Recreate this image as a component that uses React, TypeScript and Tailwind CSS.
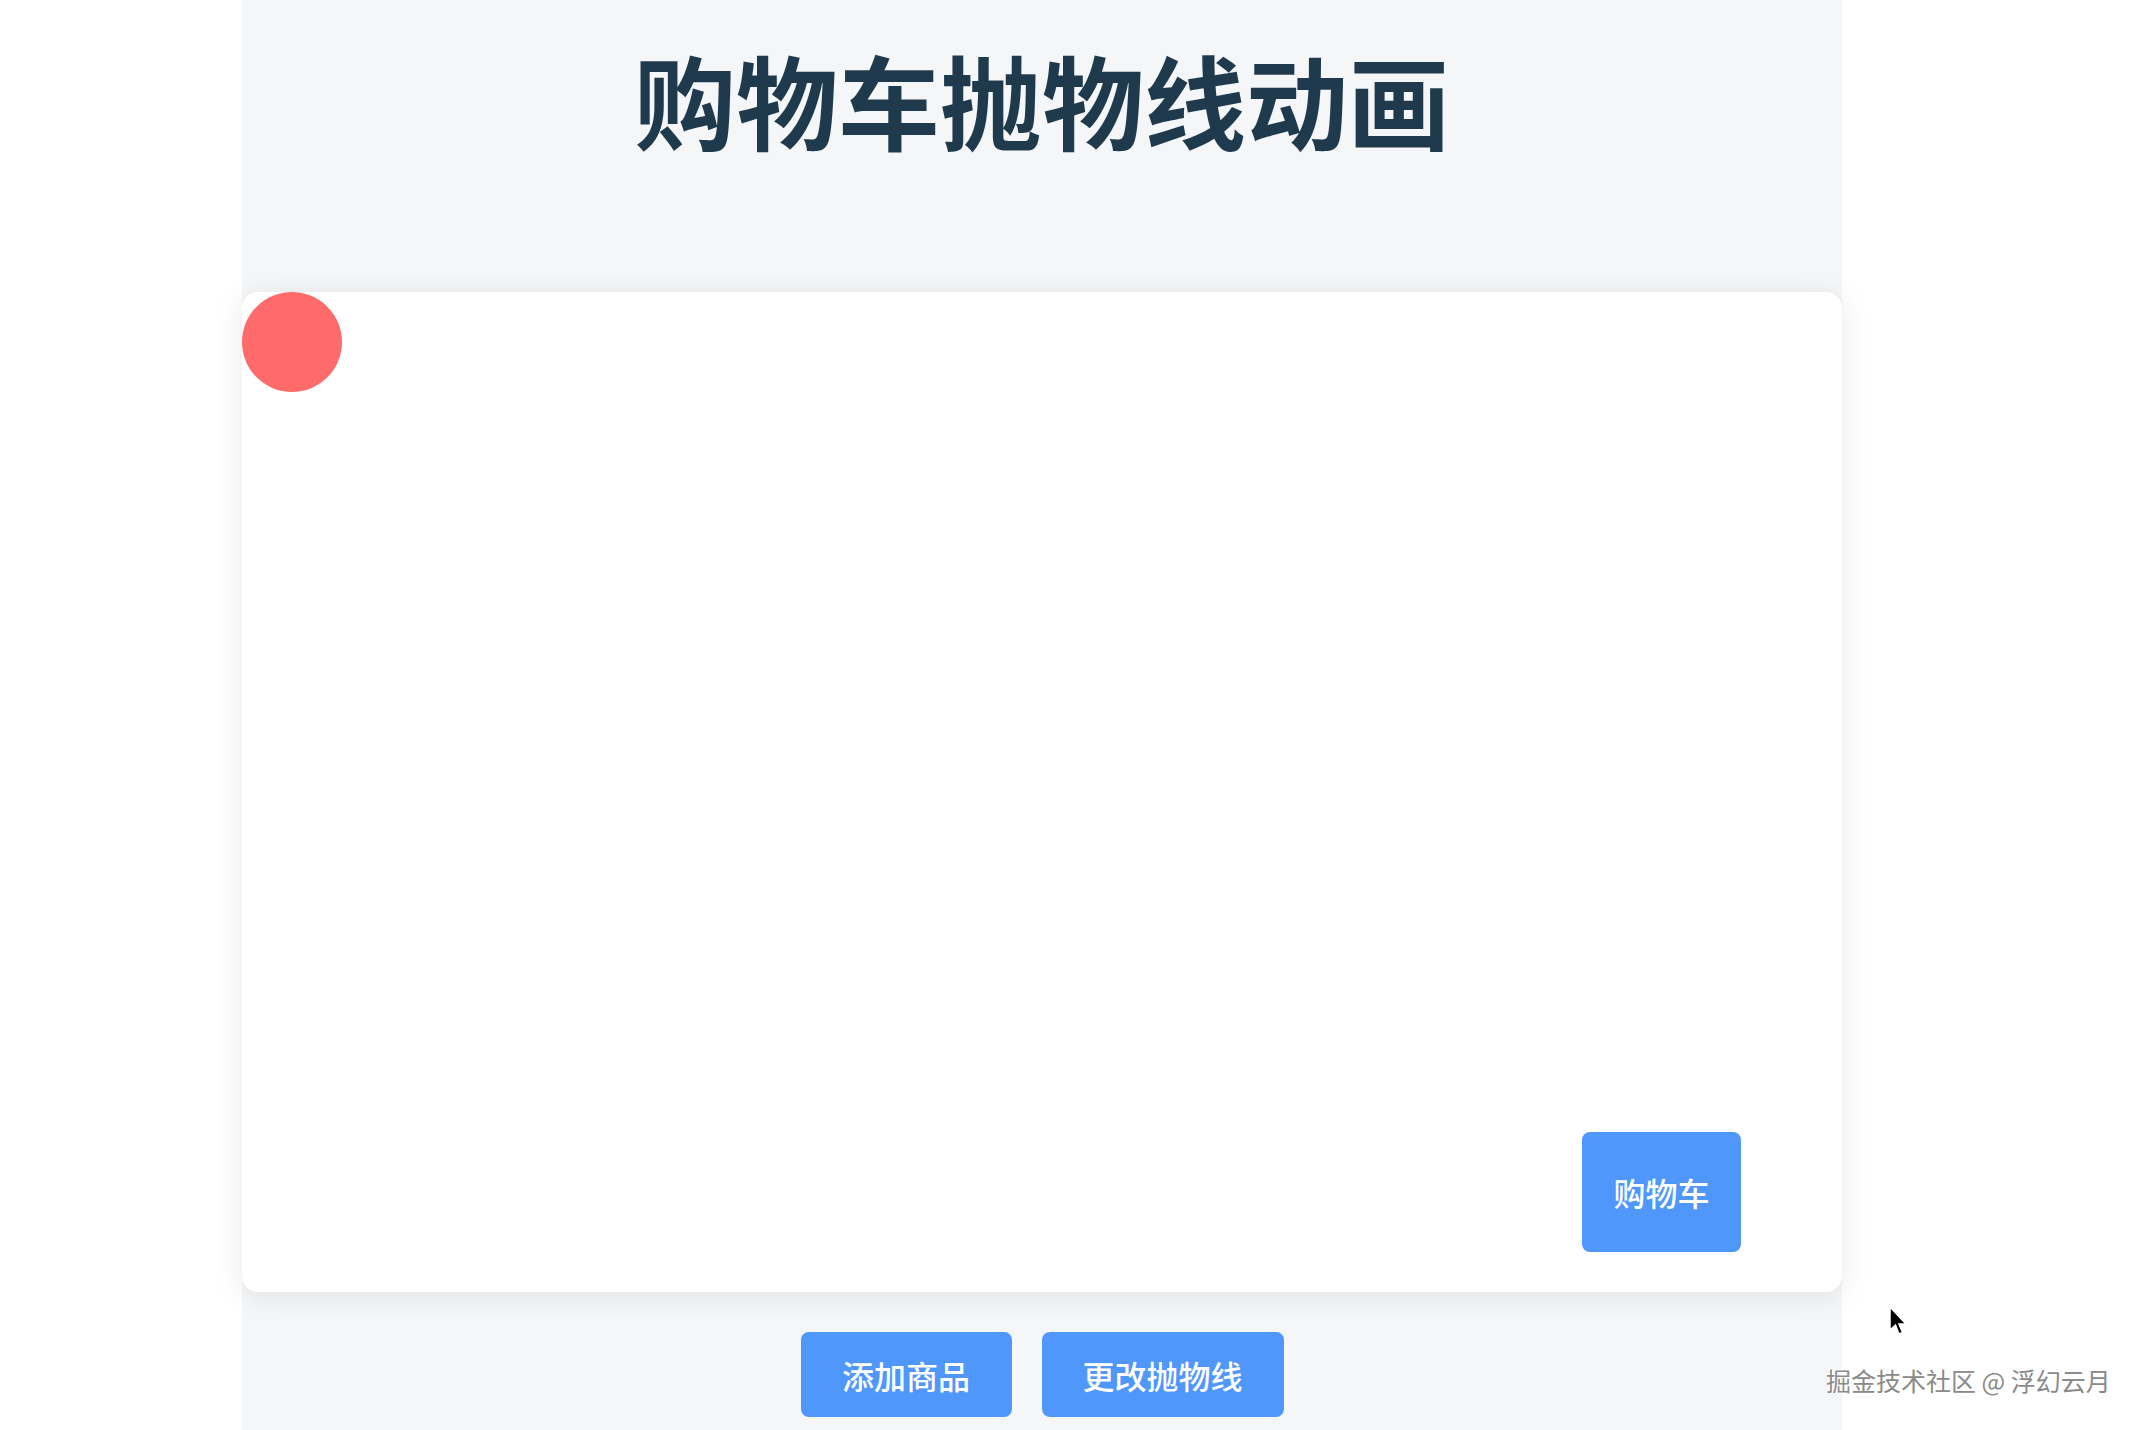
import React from "react";

export default function App() {
  const font = { fontFamily: '"Noto Sans CJK SC", "Noto Sans", sans-serif' };
  return (
    <div className="relative w-[2146px] h-[1430px] bg-white overflow-hidden" style={font}>
      <div className="ml-[242px] w-[1600px] h-[1430px] bg-[#f5f6f7] flex flex-col items-center">
        <h1 className="mt-[47px] text-[102px] leading-[104px] font-bold text-[#1f3a4c]">
          购物车抛物线动画
        </h1>
        <div className="relative mt-[141px] w-[1600px] h-[1000px] bg-white rounded-[16px] shadow-[0_4px_30px_rgba(0,0,0,0.09)] flex items-end justify-end pr-[101px] pb-[40px]">
          <div className="absolute left-0 top-0 w-[100px] h-[100px] rounded-full bg-[#ff6b6b]" />
          <button className="w-[159px] h-[120px] rounded-[8px] bg-[#4f97fb] text-white text-[32px] font-medium">
            购物车
          </button>
        </div>
        <div className="mt-[40px] flex gap-[30px]">
          <button className="w-[211px] h-[85px] rounded-[8px] bg-[#4f97fb] text-white text-[32px] font-medium">
            添加商品
          </button>
          <button className="w-[242px] h-[85px] rounded-[8px] bg-[#4f97fb] text-white text-[32px] font-medium">
            更改抛物线
          </button>
        </div>
      </div>
      <svg className="absolute left-[1888px] top-[1306px]" width="20" height="30" viewBox="0 0 20 30">
        <path d="M2 1 L2 24 L7.5 19 L11 28 L14.5 26.5 L11 18 L18 18 Z" fill="#000" stroke="#fff" strokeWidth="1.5" />
      </svg>
      <div className="absolute left-[1826px] top-[1362px] text-[25px] leading-[36px] text-[#8a8a8a] [text-shadow:1px_1px_0_#ffffff,-1px_-1px_0_#ffffff]">
        掘金技术社区 @ 浮幻云月
      </div>
    </div>
  );
}
